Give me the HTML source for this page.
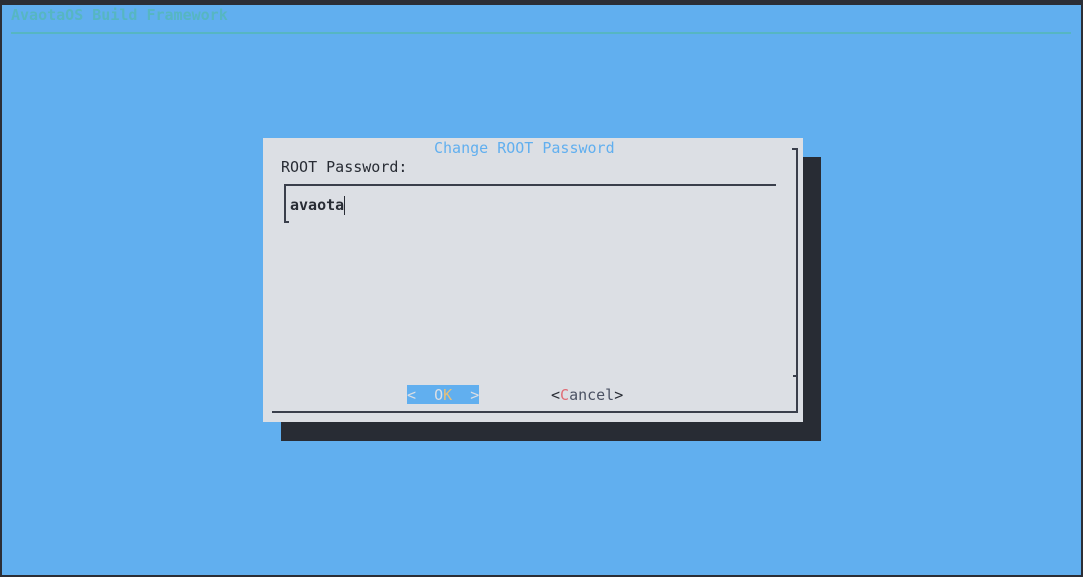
<!DOCTYPE html><html><head><style>
body{margin:0;width:1083px;height:577px;background:#2b2e36;position:relative;overflow:hidden;font-family:"DejaVu Sans Mono","Liberation Mono",monospace;font-size:15px}
div,span{position:absolute}
.t{white-space:pre;line-height:19px}
</style></head><body>
<div style="left:2px;top:5px;width:1079px;height:570px;background:#61afef"></div>
<div class="t" style="left:11px;top:6px;color:#56b6c2;font-weight:bold">AvaotaOS Build Framework</div>
<div style="left:11px;top:32px;width:1060px;height:2px;background:#56b6c2"></div>
<div style="left:281px;top:157px;width:540px;height:284px;background:#282c34"></div>
<div style="left:263px;top:138px;width:540px;height:284px;background:#dcdfe4"></div>
<div class="t" style="left:434px;top:139px;color:#61afef">Change ROOT Password</div>
<div class="t" style="left:281px;top:158px;color:#282c34">ROOT Password:</div>
<div style="left:285px;top:184px;width:491px;height:2px;background:#3a3f4b"></div>
<div style="left:284px;top:184px;width:2px;height:39px;background:#3a3f4b"></div>
<div style="left:284px;top:221px;width:5px;height:2px;background:#3a3f4b"></div>
<div class="t" style="left:290px;top:196px;color:#282c34;font-weight:bold">avaota</div>
<div style="left:344px;top:196px;width:1px;height:19px;background:#282c34"></div>
<div style="left:796px;top:148px;width:2px;height:264px;background:#3a3f4b"></div>
<div style="left:792px;top:148px;width:5px;height:2px;background:#3a3f4b"></div>
<div style="left:793px;top:375px;width:5px;height:2px;background:#3a3f4b"></div>
<div style="left:272px;top:411px;width:526px;height:2px;background:#3a3f4b"></div>
<div style="left:407px;top:385px;width:72px;height:19px;background:#61afef"></div>
<div class="t" style="left:407px;top:386px;color:#dcdfe4">&lt;  O<span style="position:static;color:#e5c07b">K</span>  &gt;</div>
<div class="t" style="left:551px;top:386px;color:#282c34">&lt;<span style="position:static;color:#e06c75">C</span><span style="position:static;color:#4b5263">ancel</span>&gt;</div>
</body></html>
